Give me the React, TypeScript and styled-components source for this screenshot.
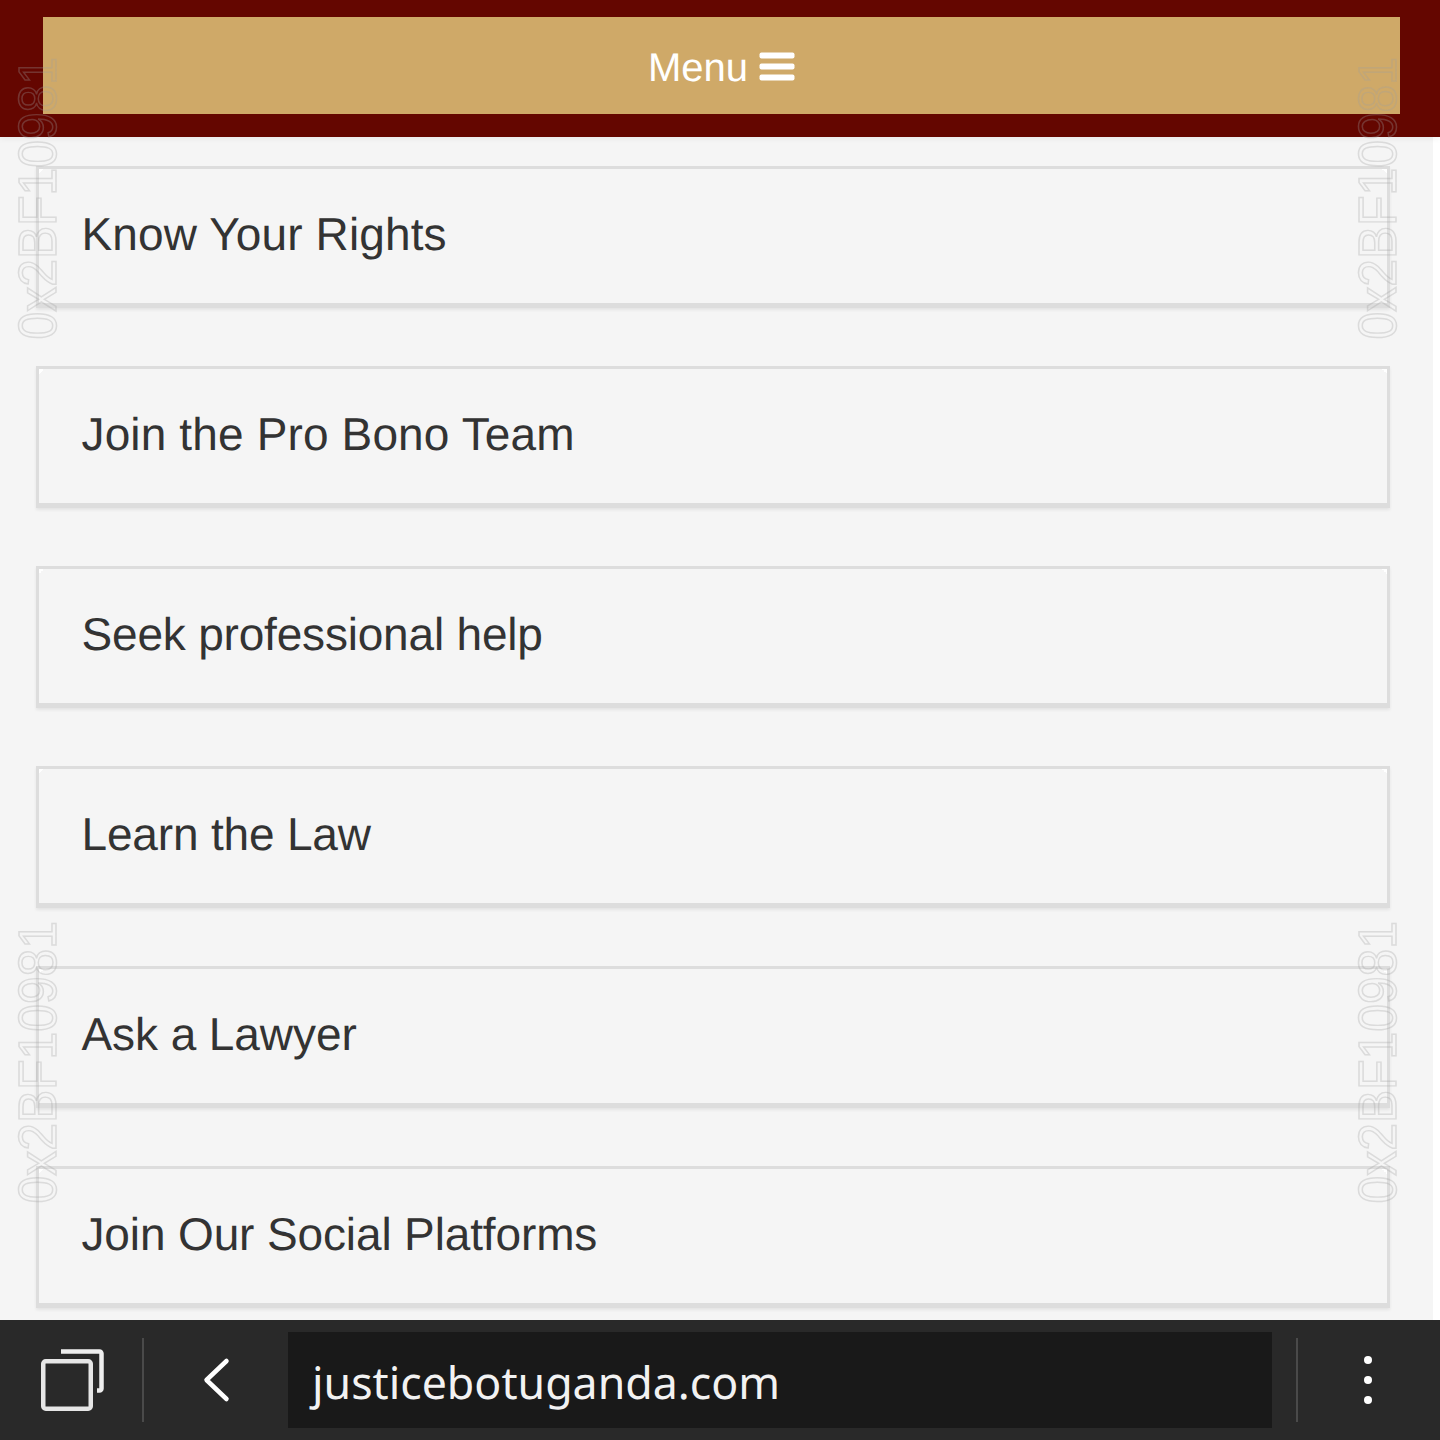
import React from 'react';
import styled, { createGlobalStyle } from 'styled-components';

const GlobalStyle = createGlobalStyle`
	html, body {
		margin: 0;
		padding: 0;
		background: #fff;
	}
`;

const Screen = styled.div`
	position: relative;
	display: flex;
	flex-direction: column;
	width: 1440px;
	height: 1440px;
	overflow: hidden;
	font-family: 'Liberation Sans', Arial, sans-serif;
	text-rendering: geometricPrecision;
`;

const Header = styled.header`
	position: relative;
	flex: none;
	padding: 17px 40px 23px 43px;
	background: #640600;
	box-shadow: 0 2px 6px rgba(0, 0, 0, 0.05);
`;

const MenuButton = styled.button`
	display: flex;
	align-items: center;
	justify-content: center;
	gap: 11px;
	box-sizing: border-box;
	width: 100%;
	height: 97px;
	padding: 3px 0 0;
	border: 0;
	background: #cfa968;
	color: #fff;
	font: 40px 'Liberation Sans', Arial, sans-serif;
	text-rendering: geometricPrecision;
`;

const MenuLabel = styled.span`
	padding-top: 2px;
`;

const Main = styled.main`
	flex: 1;
	width: 1433px;
	box-sizing: border-box;
	padding: 29px 43px 0 36px;
	overflow: hidden;
	background: #f5f5f5;
`;

const LinkList = styled.nav`
	display: flex;
	flex-direction: column;
	gap: 58px;
`;

const LinkCard = styled.a<{ $tracking: number }>`
	position: relative;
	display: flex;
	align-items: center;
	box-sizing: border-box;
	height: 142px;
	padding: 0 0 4px 42.5px;
	border: 3px solid #ddd;
	border-bottom-width: 5px;
	box-shadow: 0 2px 3px rgba(0, 0, 0, 0.07);
	color: #333;
	font-size: 46px;
	letter-spacing: ${(p) => p.$tracking}px;

	&::before,
	&::after {
		content: '';
		position: absolute;
		top: 0;
		width: 5px;
		height: 5px;
	}

	&::before {
		left: 0;
		background: linear-gradient(135deg, #fff 50%, transparent 50%);
	}

	&::after {
		right: 0;
		background: linear-gradient(225deg, #fff 50%, transparent 50%);
	}
`;

const Watermark = styled.div<{ $left: number; $top: number }>`
	position: absolute;
	left: ${(p) => p.$left}px;
	top: ${(p) => p.$top}px;
	writing-mode: vertical-rl;
	transform: rotate(180deg) scaleX(1.08);
	font-size: 49.8px;
	line-height: 41px;
	white-space: nowrap;
	color: transparent;
	-webkit-text-stroke: 1.4px rgba(160, 160, 160, 0.3);
	pointer-events: none;
`;

const BottomBar = styled.footer`
	flex: none;
	display: flex;
	align-items: center;
	height: 120px;
	background: #292929;
`;

const TabSlot = styled.div`
	display: flex;
	align-items: center;
	box-sizing: border-box;
	width: 142px;
	height: 100%;
	padding-left: 41px;
`;

const Separator = styled.div`
	flex: none;
	width: 2px;
	height: 84px;
	background: #4a4a4a;
`;

const BackSlot = styled.div`
	display: flex;
	align-items: center;
	justify-content: center;
	width: 144px;
	height: 100%;
`;

const UrlField = styled.div`
	display: flex;
	align-items: center;
	box-sizing: border-box;
	width: 984px;
	height: 96px;
	margin-right: 24px;
	padding: 5px 0 0 24px;
	background: #191919;
	color: #f2f2f2;
	font: 44.7px 'Noto Sans', 'Open Sans', sans-serif;
`;

const MoreSlot = styled.div`
	display: flex;
	flex: 1;
	align-items: center;
	justify-content: flex-end;
	padding-right: 68px;
`;

const links = [
	{ label: 'Know Your Rights', tracking: 0.13 },
	{ label: 'Join the Pro Bono Team', tracking: 0.14 },
	{ label: 'Seek professional help', tracking: -0.19 },
	{ label: 'Learn the Law', tracking: -0.17 },
	{ label: 'Ask a Lawyer', tracking: -0.08 },
	{ label: 'Join Our Social Platforms', tracking: -0.13 },
];

const marks = [
	{ left: 18, top: 57 },
	{ left: 1358, top: 57 },
	{ left: 18, top: 921 },
	{ left: 1358, top: 921 },
];

const BarsIcon = () => (
	<svg width="36" height="30" viewBox="0 0 36 30" fill="#fff">
		<rect x="0.5" y="0.5" width="35" height="6" rx="2" />
		<rect x="0.5" y="11.5" width="35" height="6" rx="2" />
		<rect x="0.5" y="22.5" width="35" height="6" rx="2" />
	</svg>
);

const TabsIcon = () => (
	<svg width="63" height="64" viewBox="0 0 63 64" fill="none" strokeLinejoin="round">
		<path d="M20 3.5 H58.5 a2 2 0 0 1 2 2 V40.5 a2 2 0 0 1 -2 2 H56" stroke="#eee" strokeWidth="4.5" />
		<rect x="2.25" y="13.25" width="47.5" height="47.5" rx="2.5" stroke="#e6e6e6" strokeWidth="4.5" />
	</svg>
);

const BackIcon = () => (
	<svg width="28" height="46" viewBox="0 0 28 46" fill="none">
		<path d="M24.5 4 L4.5 23 L24.5 42" stroke="#fff" strokeWidth="4.5" strokeLinecap="round" strokeLinejoin="round" />
	</svg>
);

const MoreIcon = () => (
	<svg width="8" height="48" viewBox="0 0 8 48" fill="#fff">
		<circle cx="4" cy="4" r="4" />
		<circle cx="4" cy="24" r="4" />
		<circle cx="4" cy="44" r="4" />
	</svg>
);

export default function App() {
	return (
		<Screen>
			<GlobalStyle />
			<Header>
				<MenuButton>
					<MenuLabel>Menu</MenuLabel>
					<BarsIcon />
				</MenuButton>
			</Header>
			<Main>
				<LinkList>
					{links.map((link) => (
						<LinkCard key={link.label} $tracking={link.tracking}>
							{link.label}
						</LinkCard>
					))}
				</LinkList>
			</Main>
			<BottomBar>
				<TabSlot>
					<TabsIcon />
				</TabSlot>
				<Separator />
				<BackSlot>
					<BackIcon />
				</BackSlot>
				<UrlField>justicebotuganda.com</UrlField>
				<Separator />
				<MoreSlot>
					<MoreIcon />
				</MoreSlot>
			</BottomBar>
			{marks.map((m) => (
				<Watermark key={`${m.left}-${m.top}`} $left={m.left} $top={m.top}>
					0x2BF10981
				</Watermark>
			))}
		</Screen>
	);
}
